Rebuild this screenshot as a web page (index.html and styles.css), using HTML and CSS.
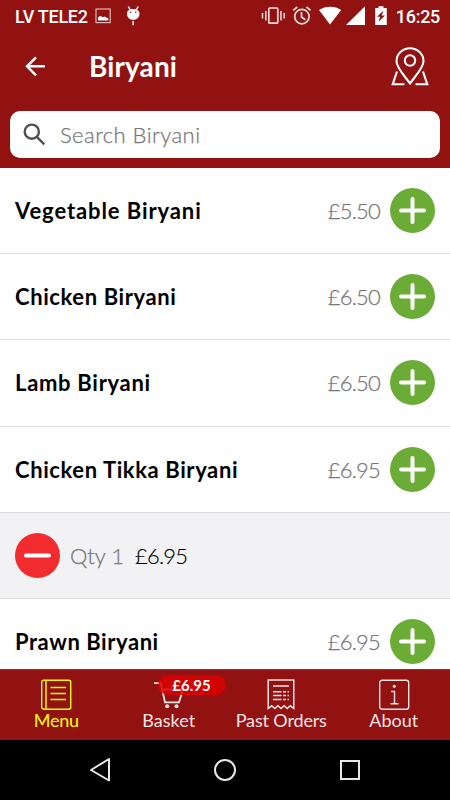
FILE: index.html
```html
<!DOCTYPE html>
<html lang="en">
<head>
<meta charset="utf-8">
<title>Biryani</title>
<link rel="stylesheet" href="styles.css">
</head>
<body>
<div class="app">
  <header class="top">
    <div class="status">
      <span class="carrier">LV TELE2</span>
      <svg class="status-left" width="46" height="20" viewBox="95 6 46 20">
        <rect x="96" y="9" width="14.2" height="13.6" fill="none" stroke="#e2b8b8" stroke-width="1.2"/>
        <path d="M98 20.500v-3l2.500-1.800 2 1.500 2-.8 3.800 2v2.100z" fill="#fff"/>
        <path d="M127 13.500c0-3 2.800-4.500 6.200-4.500s6.300 1.500 6.300 4.500c0 4-2.800 6.300-6.300 6.300s-6.200-2.300-6.200-6.300z" fill="#fff"/>
        <path d="M128.300 6.500l2 3.500M138.200 6.500l-2 3.500M133.200 21v4.300" stroke="#fff" stroke-width="1.500"/>
        <circle cx="130.700" cy="12.300" r=".8" fill="#921111"/><circle cx="135.700" cy="12.300" r=".8" fill="#921111"/>
      </svg>
      <svg class="status-right" width="128" height="20" viewBox="261 6 128 20">
        <g fill="none" stroke="#f5dede" stroke-width="1.700">
          <rect x="268.800" y="8" width="9" height="15.200" rx="1"/>
          <path d="M265.800 11v9.500M262.500 13v5.500M281 11v9.500M284.200 13v5.500" stroke-width="1.500"/>
          <circle cx="301.900" cy="16.600" r="7.200"/>
          <path d="M301.500 12v5l3.800 2.800M293.200 10.300l4-3.300M310.500 10.300l-4-3.300"/>
        </g>
        <g fill="#fff">
          <path d="M319 10c6-4.500 16.500-4.500 22.200 0L330 24.500z"/>
          <path d="M346 25L365 6.300V25z"/>
          <path d="M378.500 6.300h5v1.800h3.300V25H375.200V8.100h3.300z"/>
        </g>
        <path d="M383.500 10.500l-6.500 6.200h3.200l-1.700 5 6.500-6.300h-3.300z" fill="#921111"/>
      </svg>
      <span class="clock">16:25</span>
    </div>
    <div class="titlebar">
      <svg class="back" width="22" height="22" viewBox="24 55 22 22"><path d="M45 66.300H27M36 57.300l-9 9 9 9" fill="none" stroke="#fff" stroke-width="2.400"/></svg>
      <h1>Biryani</h1>
      <svg class="map" width="40" height="42" viewBox="390 45 40 42">
        <g fill="none" stroke="#fff" stroke-width="2.100">
          <path d="M410 83.500C405.500 77 396.500 68 396.500 61.300a13.500 13 0 0 1 27 0C423.500 68 414.500 77 410 83.500z"/>
          <circle cx="410" cy="60.500" r="5.200"/>
          <path d="M397 71.500l-4.300 12.800h11.800M423 71.500l4.300 12.800h-11.800"/>
        </g>
      </svg>
    </div>
    <div class="search">
      <svg width="24" height="24" viewBox="22 122 24 24"><g fill="none" stroke="#505050" stroke-width="2.400"><circle cx="31.800" cy="130.700" r="7.100"/><path d="M36.800 135.800l7.500 7.500"/></g></svg>
      <span>Search Biryani</span>
    </div>
  </header>
  <main class="list">
    <div class="row"><span class="name n1">Vegetable Biryani</span><span class="price">£5.50</span><svg class="btn" viewBox="0 0 45 45"><circle cx="22.500" cy="22.500" r="22.500" fill="#6aac35"/><path d="M11 22.500h23M22.500 11v23"/></svg></div>
    <div class="row"><span class="name n2">Chicken Biryani</span><span class="price">£6.50</span><svg class="btn" viewBox="0 0 45 45"><circle cx="22.500" cy="22.500" r="22.500" fill="#6aac35"/><path d="M11 22.500h23M22.500 11v23"/></svg></div>
    <div class="row"><span class="name n3">Lamb Biryani</span><span class="price">£6.50</span><svg class="btn" viewBox="0 0 45 45"><circle cx="22.500" cy="22.500" r="22.500" fill="#6aac35"/><path d="M11 22.500h23M22.500 11v23"/></svg></div>
    <div class="row"><span class="name n4">Chicken Tikka Biryani</span><span class="price">£6.95</span><svg class="btn" viewBox="0 0 45 45"><circle cx="22.500" cy="22.500" r="22.500" fill="#6aac35"/><path d="M11 22.500h23M22.500 11v23"/></svg></div>
    <div class="row chosen"><svg class="btn minus" viewBox="0 0 45 45"><circle cx="22.500" cy="22.500" r="22.500" fill="#f12b2e"/><path d="M11 22.500h23"/></svg><span class="qty">Qty 1</span><span class="sum">£6.95</span></div>
    <div class="row"><span class="name n5">Prawn Biryani</span><span class="price">£6.95</span><svg class="btn" viewBox="0 0 45 45"><circle cx="22.500" cy="22.500" r="22.500" fill="#6aac35"/><path d="M11 22.500h23M22.500 11v23"/></svg></div>
  </main>
  <nav class="tabs">
    <div class="tab active">
      <svg width="32" height="32" viewBox="0 0 32 32"><g fill="none" stroke="currentColor" stroke-width="1.400"><rect x="1.700" y="1.200" width="29" height="29" rx="2"/><path d="M6 1v29M10.500 8.500H26M10.500 14.500H26M10.500 20.500H26"/></g></svg>
      <span class="t1">Menu</span>
    </div>
    <div class="tab">
      <svg width="32" height="32" viewBox="0 0 32 32"><g fill="none" stroke="currentColor" stroke-width="1.800"><path d="M1 4.200h6.800L12 23.300h14L30 10.500H9"/></g><circle cx="14.200" cy="27.300" r="2" fill="currentColor"/><circle cx="23.500" cy="27.300" r="2" fill="currentColor"/></svg>
      <span class="badge">£6.95</span>
      <span class="t2">Basket</span>
    </div>
    <div class="tab">
      <svg width="32" height="32" viewBox="0 0 32 32"><g fill="none" stroke="currentColor" stroke-width="1.500"><path d="M3.200 29.500V1H28.800v28.500l-3.500-2.700-3.100 2.700-3.100-2.700-3.100 2.700-3.100-2.700-3.100 2.700-3.100-2.700z"/><path d="M8 7h16"/><path d="M8 12.700h8.500M8 16.500h8.500M8 20.500h8.500M18 12.700h3M18 16.500h3M18 20.500h3M22.500 12.700h1.500M22.500 16.500h1.500M22.500 20.500h1.500"/></g></svg>
      <span class="t3">Past Orders</span>
    </div>
    <div class="tab">
      <svg width="32" height="32" viewBox="0 0 32 32"><g fill="none" stroke="currentColor" stroke-width="1.400"><rect x="1.700" y="1.200" width="29" height="29" rx="2.500"/><path d="M13 12.500h3.500v12M12.500 24.800h8"/></g><circle cx="16.300" cy="7.200" r="1.500" fill="currentColor"/></svg>
      <span class="t4">About</span>
    </div>
  </nav>
  <div class="system">
    <svg width="24" height="26" viewBox="88 757 24 26"><path d="M109 759v21.500L91 770z" fill="none" stroke="#e8e8e8" stroke-width="2" stroke-linejoin="round"/></svg>
    <svg width="24" height="26" viewBox="213 757 24 26"><circle cx="225" cy="770" r="10" fill="none" stroke="#e8e8e8" stroke-width="2"/></svg>
    <svg width="24" height="26" viewBox="338 757 24 26"><rect x="341" y="761" width="18" height="18" fill="none" stroke="#e8e8e8" stroke-width="2"/></svg>
  </div>
</div>
</body>
</html>
```
FILE: styles.css
```css
* { box-sizing: border-box; }
body { margin: 0; background: #000; font-family: Lato, sans-serif; }
svg { display: block; flex: none; }
.app { width: 450px; height: 800px; display: flex; flex-direction: column; overflow: hidden; }
.top { height: 168px; background: #921111; color: #fff; flex: none; }
.status { height: 32px; padding: 0 10px 0 15px; display: flex; align-items: center; font-family: Roboto, sans-serif; font-weight: 500; font-size: 18px; white-space: nowrap; }
.carrier { width: 80px; letter-spacing: -.3px; }
.status-right { margin-left: 120px; }
.clock { margin-left: auto; letter-spacing: -.3px; }
.titlebar { height: 79px; display: flex; align-items: flex-start; padding: 13px 20px 0 24px; }
.back { margin-top: 10px; }
h1 { margin: 5px auto 0 43px; font-weight: 700; font-size: 28px; line-height: 32px; letter-spacing: .1px; }
.search { height: 47px; margin: 0 10px; padding: 0 12px; display: flex; align-items: center; gap: 14px; background: #fff; border-radius: 10px; color: #777; font-size: 22px; font-weight: 300; letter-spacing: .45px; -webkit-text-stroke: .25px; }
.list { flex: 1; overflow: hidden; background: #fff; }
.row { height: 86.2px; padding: 0 15px; display: flex; align-items: center; border-bottom: 1px solid #ddd; font-size: 22px; white-space: nowrap; }
.name { flex: 1; color: #000; font-weight: 700; }
.n1 { letter-spacing: .9px; }
.n2 { letter-spacing: .6px; }
.n3 { letter-spacing: .7px; }
.n4 { letter-spacing: .6px; }
.n5 { letter-spacing: .55px; }
.price { color: #777; font-weight: 300; margin-right: 10px; letter-spacing: -.8px; -webkit-text-stroke: .25px; }
.btn { width: 45px; height: 45px; }
.btn path { fill: none; stroke: #fff; stroke-width: 4; stroke-linecap: round; }
.chosen { background: #f2f2f4; font-weight: 300; }
.qty { color: #777; margin-left: 10px; width: 65px; -webkit-text-stroke: .25px; }
.sum { color: #000; letter-spacing: -.8px; -webkit-text-stroke: .15px; }
.tabs { height: 71px; flex: none; display: grid; grid-template-columns: repeat(4, 112.5px); background: #921111; border-top: 1px solid #684040; color: #f5e4e4; }
.tab { position: relative; display: flex; flex-direction: column; align-items: center; padding-top: 9px; font-size: 18px; line-height: 19px; white-space: nowrap; }
.active { color: #ff0; }
.active span { letter-spacing: -.3px; }
.t3 { letter-spacing: -.15px; }
.badge { position: absolute; left: 45px; top: 5px; width: 68px; height: 20px; border-radius: 10px; background: rgba(218, 0, 0, .85); color: #fff; font-size: 15px; font-weight: 700; line-height: 20px; text-align: center; }
.system { height: 60px; flex: none; display: flex; align-items: center; justify-content: space-between; padding: 0 88px; background: #000; }
```
